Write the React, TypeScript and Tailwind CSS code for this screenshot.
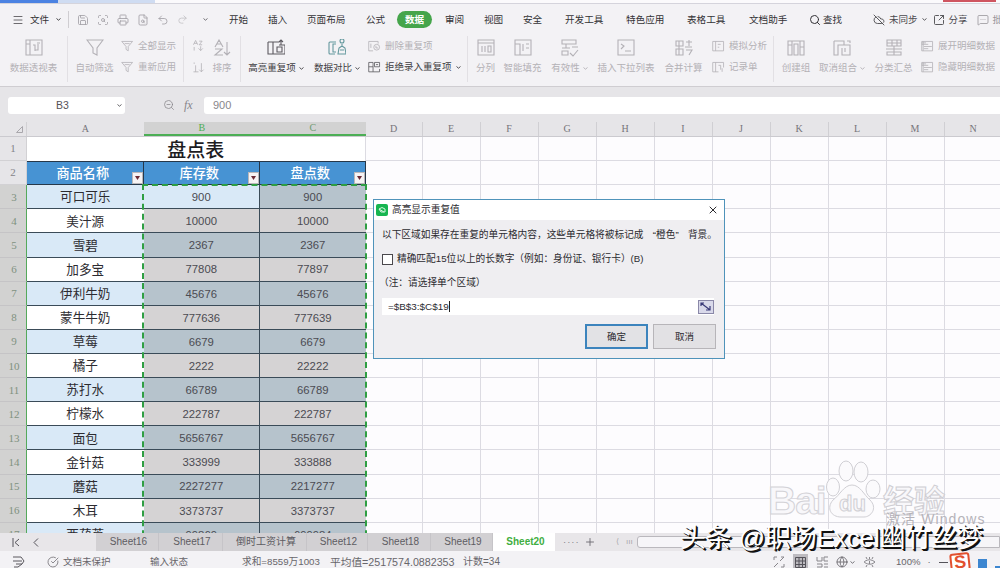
import { useState } from 'react'
import type { ReactNode } from 'react'
import clsx from 'clsx'
import {
  Menu,
  Save,
  Printer,
  FileSearch,
  ScanSearch,
  Undo2,
  Redo2,
  Search,
  CloudOff,
  SquareArrowOutUpRight,
  MessageSquareMore,
  X,
  Plus,
  ZoomOut,
  Globe,
  CheckCircle,
} from 'lucide-react'

interface Fila {
  nombre: string; stock: string; conteo: string;
}

const FILAS: Fila[] = [
  { nombre: '可口可乐', stock: '900', conteo: '900' },
  { nombre: '美汁源', stock: '10000', conteo: '10000' },
  { nombre: '雪碧', stock: '2367', conteo: '2367' },
  { nombre: '加多宝', stock: '77808', conteo: '77897' },
  { nombre: '伊利牛奶', stock: '45676', conteo: '45676' },
  { nombre: '蒙牛牛奶', stock: '777636', conteo: '777639' },
  { nombre: '草莓', stock: '6679', conteo: '6679' },
  { nombre: '橘子', stock: '2222', conteo: '22222' },
  { nombre: '苏打水', stock: '66789', conteo: '66789' },
  { nombre: '柠檬水', stock: '222787', conteo: '222787' },
  { nombre: '面包', stock: '5656767', conteo: '5656767' },
  { nombre: '金针菇', stock: '333999', conteo: '333888' },
  { nombre: '蘑菇', stock: '2227277', conteo: '2217277' },
  { nombre: '木耳', stock: '3373737', conteo: '3373737' },
  { nombre: '西葫芦', stock: '99869', conteo: '699984' },
]

const COLUMNAS = ['D', 'E', 'F', 'G', 'H', 'I', 'J', 'K', 'L', 'M', 'N']

const MENUS = [
  { label: '开始', w: 'w-[39px]' },
  { label: '插入', w: 'w-[39px]' },
  { label: '页面布局', w: 'w-[59px]' },
  { label: '公式', w: 'w-[31px]' },
  { label: '数据', w: 'w-[48px]' },
  { label: '审阅', w: 'w-[39px]' },
  { label: '视图', w: 'w-[39px]' },
  { label: '安全', w: 'w-[42px]' },
  { label: '开发工具', w: 'w-[61px]' },
  { label: '特色应用', w: 'w-[61px]' },
  { label: '表格工具', w: 'w-[62px]' },
  { label: '文档助手', w: 'w-[60px]' },
]

const HOJAS = [
  { label: 'Sheet16', w: 'w-[63px]' },
  { label: 'Sheet17', w: 'w-[64px]' },
  { label: '倒时工资计算', w: 'w-[84px]' },
  { label: 'Sheet12', w: 'w-[61px]' },
  { label: 'Sheet18', w: 'w-[63px]' },
  { label: 'Sheet19', w: 'w-[62px]' },
  { label: 'Sheet20', w: 'w-[62px]' },
]

const ICONOS: Record<string, string> = {
  pivot: 'M1 1h16v15H1zM1 5h4M5 1v15M8 6h2v6M13 5v6h-3M12 4h3',
  filtro: 'M1 1h16l-6 8v7l-4-2V9z',
  repetidos: 'M1 3h11M1 3v12h5M6 3v12M6 15h12V6h-6M10 8v5h5V8zM14 1v5M12 3l2-2 2 2',
  comparar: 'M8 3H2a1 1 0 0 0-1 1v10a1 1 0 0 0 1 1h5M8 5H5v8h3M12 2a2 2 0 1 1 4 0 2 2 0 0 1-4 0M14 5v3M10 15l1-6 3-2 3 2 1 6zM12 11h4',
  columnas: 'M1 1h16v15H1zM1 4h16M5 7v6M8 7v6M11 7h3v6h-3z',
  relleno: 'M1 1h16v15H1zM1 5h5v11M9 5v7M12 5h3M12 9h3',
  validez: 'M1 1h14v4H1zM1 9h8M1 12h6v4H1zM11 8h6M9 14l3 3 5-6M5 5v4',
  lista: 'M1 1h16v15H1zM4 5l3 2-3 3M8 12h6',
  consolidar: 'M1 2h7v5H1zM1 10h7v6H1zM4 2v14M11 3h6M14 1v6M11 11h6l-3 5M10 8h7',
  grupo: 'M1 2h4v14H1zM7 5h4v11H7zM13 2h4v14h-4zM1 6h4M13 8h4M5 2h8',
  desagrupar: 'M1 2h10v4M1 2v14h4V6h12v10H9V9M12 9v4M14 2h3v2',
  subtotal: 'M2 1h14v6H2zM2 4h14M7 1v6M12 1v6M1 10h16M2 13h14v3H2zM9 7v9',
  dupes: 'M14 5V2H1v13h6M4 5v6M8 10a4 4 0 1 1 8 0 4 4 0 0 1-8 0M11 8v3h3',
  rechazar: 'M1 2h6v13H1zM1 8h6M9 2h7v6H9zM7 15h9v-4M11 5h3',
  analisis: 'M1 2h15v13H1zM5 2v13M8 6h4M8 10h2',
  ficha: 'M1 2h15v7M1 2v13h8M5 2v13M9 6h3v6M14 10v5',
  detalle: 'M1 2h15v13H1zM1 6h9M4 9h11M4 12h6M1 4h6M3 2v13',
  reaplicar: 'M1 2h15l-6 7v6l-3-2V9zM5 5h7',
  az: 'M2 8l3-6 3 6M3 6h4M10 3h4l-4 5h4M3 11v5M12 10v6M9 13l3 3 3-3',
  asc: 'M3 2v2M5 6v9M2 15h7M13 3v12M10 12l3 3 3-3',
  ordenar: 'M2 8l4-7 4 7M4 5h4M2 10h7l-7 6h8M14 3v13M11 13l3 3 3-3',
}

function Icono({ name, size = 18, color = '#b3b1b6' }: { name: string; size?: number; color?: string }) {
  return (
    <svg width={size} height={size} viewBox="0 0 18 18" fill="none" stroke={color} strokeWidth={1.1}>
      <path d={ICONOS[name]} />
    </svg>
  )
}

function BotonGrande({ icon, label, w, activo, flecha, color }: {
  icon: string; label: string; w: string; activo?: boolean; flecha?: boolean; color?: string
}) {
  return (
    <div className={clsx('flex shrink-0 flex-col items-center gap-[4px] pt-[3px]', w)}>
      <Icono name={icon} color={color} />
      <span className={clsx('flex items-center gap-[3px] leading-[14px]', activo ? 'text-[#3f3e42]' : 'text-[#b3b1b6]')}>
        {label}
        {flecha && <Flecha />}
      </span>
    </div>
  )
}

function FilaPequena({ icon, label, activo, flecha }: { icon: string; label: string; activo?: boolean; flecha?: boolean }) {
  return (
    <div className={clsx('flex h-[14px] items-center gap-[4px]', activo ? 'text-[#3f3e42]' : 'text-[#b3b1b6]')}>
      <Icono name={icon} size={13} color={activo ? '#5a585d' : '#b3b1b6'} />
      <span>{label}</span>
      {flecha && <Flecha />}
    </div>
  )
}

function Flecha() {
  return (
    <svg width="5" height="3" viewBox="0 0 5 3" fill="none" stroke="currentColor" strokeWidth="0.9" className="shrink-0">
      <path d="M0.5 0.5l2 1.7 2-1.7" />
    </svg>
  )
}

function Separador() {
  return <div className="h-[46px] w-px shrink-0 bg-[#e2e0e4]" />
}

function Pila({ children, w }: { children: ReactNode; w: string }) {
  return <div className={clsx('flex shrink-0 flex-col gap-[7px] pt-[3px]', w)}>{children}</div>
}

function CabeceraTabla({ label }: { label: string }) {
  return (
    <div className="relative flex items-center justify-center border-t border-r border-b border-[#26384a] bg-[#4793d3] text-[13.2px] font-medium text-white">
      <span className="pr-1">{label}</span>
      <span className="absolute right-0 bottom-0 flex h-[12px] w-[11px] items-center justify-center border border-[#b9b7ba] bg-[#f6f3f4]">
        <svg width="5" height="4" viewBox="0 0 5 4" fill="#6b2a35"><path d="M0 0h5L2.500 4z" /></svg>
      </span>
    </div>
  )
}

function Vacias() {
  return (
    <>
      {COLUMNAS.map(c => (
        <div key={c} className="border-r border-b border-[#dcdbe2]" />
      ))}
    </>
  )
}

export default function App() {
  const [hoja, setHoja] = useState('Sheet20')
  const [abierto, setAbierto] = useState(true)

  return (
    <div className="relative flex h-[568px] w-[1000px] flex-col overflow-hidden bg-[#f3f2f5] font-['Liberation_Sans','Noto_Sans_CJK_SC',sans-serif] text-[9.5px] leading-none whitespace-nowrap text-[#333236]">

      {/* BARRA DE TITULO */}
      <div className="flex h-[4px] shrink-0 items-start border-b border-[#d5d4dc] bg-[#fbfafc]">
        <div className="h-[3px] w-[58px] bg-[#4b82e2]" />
        <div className="h-[3px] w-[97px] bg-[#cfdcf2]" />
        <div className="ml-[788px] h-[2px] w-[53px] bg-[#cf5560]" />
      </div>

      {/* MENU */}
      <div className="flex h-[31px] shrink-0 items-center">
        <div className="flex w-[68px] shrink-0 items-center pl-[12px]">
          <Menu size={12} strokeWidth={1.8} className="text-[#5d5b60]" />
          <span className="mr-[7px] ml-[6px] text-[9.6px]">文件</span>
          <Flecha />
        </div>
        <div className="h-[17px] w-px shrink-0 bg-[#cfcdd1]" />
        <div className="flex w-[160px] shrink-0 items-center gap-[8px] pl-[8px] text-[#a3a1a6]">
          <Save size={12} strokeWidth={1.7} />
          <ScanSearch size={12} strokeWidth={1.7} />
          <Printer size={12} strokeWidth={1.7} />
          <FileSearch size={12} strokeWidth={1.7} />
          <Undo2 size={12} strokeWidth={1.7} />
          <Redo2 size={11} strokeWidth={1.7} className="text-[#c0bec3]" />
          <span className="ml-[7px] text-[#66646a]"><Flecha /></span>
        </div>
        {MENUS.map(m => m.label === '数据' ? (
          <div key={m.label} className="w-[48px] shrink-0">
            <span className="flex h-[17px] w-[35px] items-center justify-center rounded-full bg-[#45a54b] text-[9.6px] font-bold text-white">{m.label}</span>
          </div>
        ) : (
          <span key={m.label} className={clsx('shrink-0 text-[9.6px]', m.w)}>{m.label}</span>
        ))}
        <div className="flex w-[64px] shrink-0 items-center gap-[2px]">
          <Search size={12} strokeWidth={2} /> 查找
        </div>
        <div className="flex shrink-0 items-center gap-[4px] text-[#4a494d]">
          <CloudOff size={12} strokeWidth={1.8} />
          <span>未同步</span>
          <Flecha />
          <SquareArrowOutUpRight size={12} strokeWidth={1.8} className="ml-[2px]" />
          <span>分享</span>
          <span className="ml-[5px] flex items-center gap-[4px] text-[#98969b]"><MessageSquareMore size={12} strokeWidth={1.6} />批注</span>
        </div>
      </div>

      {/* CINTA */}
      <div className="flex h-[52px] shrink-0 border-b border-[#cfcdd1] pt-px">
        <BotonGrande icon="pivot" label="数据透视表" w="w-[67px]" />
        <Separador />
        <BotonGrande icon="filtro" label="自动筛选" w="w-[53px]" />
        <Pila w="w-[62px]">
          <FilaPequena icon="reaplicar" label="全部显示" />
          <FilaPequena icon="reaplicar" label="重新应用" />
        </Pila>
        <Separador />
        <div className="flex w-[28px] shrink-0 flex-col items-center gap-[9px] pt-[3px]">
          <Icono name="az" size={13} />
          <Icono name="asc" size={13} />
        </div>
        <BotonGrande icon="ordenar" label="排序" w="w-[20px]" />
        <div className="w-[8px] shrink-0" />
        <Separador />
        <BotonGrande icon="repetidos" label="高亮重复项" w="w-[70px]" activo flecha color="#5c5a60" />
        <BotonGrande icon="comparar" label="数据对比" w="w-[52px]" activo flecha color="#63989d" />
        <Pila w="w-[104px] pl-[5px]">
          <FilaPequena icon="dupes" label="删除重复项" />
          <FilaPequena icon="rechazar" label="拒绝录入重复项" activo flecha />
        </Pila>
        <Separador />
        <BotonGrande icon="columnas" label="分列" w="w-[35px]" />
        <BotonGrande icon="relleno" label="智能填充" w="w-[39px]" />
        <BotonGrande icon="validez" label="有效性" w="w-[55px]" flecha />
        <BotonGrande icon="lista" label="插入下拉列表" w="w-[58px]" />
        <BotonGrande icon="consolidar" label="合并计算" w="w-[57px]" />
        <Pila w="w-[61px]">
          <FilaPequena icon="analisis" label="模拟分析" />
          <FilaPequena icon="ficha" label="记录单" />
        </Pila>
        <Separador />
        <BotonGrande icon="grupo" label="创建组" w="w-[44px]" />
        <BotonGrande icon="desagrupar" label="取消组合" w="w-[48px]" flecha />
        <BotonGrande icon="subtotal" label="分类汇总" w="w-[55px]" />
        <Pila w="w-[80px]">
          <FilaPequena icon="detalle" label="展开明细数据" />
          <FilaPequena icon="detalle" label="隐藏明细数据" />
        </Pila>
      </div>

      {/* BARRA DE FORMULAS */}
      <div className="flex h-[35px] shrink-0 items-center bg-[#e6e5e8] pt-px">
        <div className="ml-[8px] flex h-[17px] w-[117px] items-center rounded-[3px] bg-white text-[10.5px] text-[#555358]">
          <span className="w-[109px] text-center">B3</span>
          <Flecha />
        </div>
        <ZoomOut size={12} strokeWidth={1.5} className="ml-[38px] text-[#88868b]" />
        <span className="ml-[9px] w-[20px] font-['Liberation_Serif',serif] text-[12px] text-[#88868b] italic">fx</span>
        <div className="flex h-[17px] flex-1 items-center rounded-l-[3px] bg-white pl-[9px] text-[11px] text-[#88868b]">900</div>
      </div>

      {/* HOJA DE CALCULO */}
      <div className="relative h-[411px] shrink-0 overflow-hidden bg-[#fdfcfe]">
        <div className="grid h-[15px] grid-cols-[27px_116.5px_116.5px_105.5px_57px_repeat(10,58px)] border-b border-[#cbcacf] bg-[#e6e5e8] font-['Liberation_Serif',serif] text-[10px] text-[#76747a]">
          <div className="flex items-end justify-end border-r border-[#d2d1d4] pr-[3px] pb-[3px]">
            <svg width="7" height="7" viewBox="0 0 7 7" fill="none" stroke="#a9a7ac"><path d="M6.500 0.500v6h-6z" /></svg>
          </div>
          <div className="flex items-center justify-center">A</div>
          <div className="flex items-center justify-center border-b-2 border-[#4cae55] bg-[#d2d2d2] text-[#4cae55]">B</div>
          <div className="flex items-center justify-center border-b-2 border-[#4cae55] bg-[#d2d2d2] text-[#6f9b72]">C</div>
          {COLUMNAS.map(c => (
            <div key={c} className="flex items-center justify-center border-r border-[#d0cfd3]">{c}</div>
          ))}
        </div>

        <div className="grid auto-rows-[24.12px] grid-cols-[27px_116.5px_116.5px_105.5px_57px_repeat(10,58px)]">
          <div className="flex items-center justify-center border-r border-b border-[#d2d1d4] bg-[#e6e5e8] font-['Liberation_Serif',serif] text-[11px] text-[#85838a]">1</div>
          <div className="col-span-3 flex items-center justify-center border-r border-[#dcdbe2] bg-white pt-[2px] text-[19px] font-medium text-[#1d1c1f]">盘点表</div>
          <Vacias />
          <div className="flex items-center justify-center border-r border-b border-[#d2d1d4] bg-[#e6e5e8] font-['Liberation_Serif',serif] text-[11px] text-[#85838a]">2</div>
          <CabeceraTabla label="商品名称" />
          <CabeceraTabla label="库存数" />
          <CabeceraTabla label="盘点数" />
          <Vacias />
          {FILAS.map((f, i) => (
            <div key={f.nombre} className="contents">
              <div className="flex items-center justify-center border-r border-b border-r-[#55a95b] border-b-[#c5c4c6] bg-[#d2d2d1] pt-px pl-[2px] font-['Liberation_Serif',serif] text-[11px] text-[#7f917f]">{i + 3}</div>
              <div className={clsx('flex items-center justify-center border-b border-[#3a4b58] pt-[2px] text-[12.6px] text-[#2c2b30]', i % 2 ? 'bg-white' : 'bg-[#d9e9f7]')}>{f.nombre}</div>
              <div className={clsx('flex items-center justify-center border-r border-b border-[#3a4b58] pt-[2px] text-[11.3px] text-[#4b4b52]', i === 0 ? 'bg-[#d9e9f7]' : i % 2 ? 'bg-[#d5d3d4]' : 'bg-[#b6c3cc]')}>{f.stock}</div>
              <div className={clsx('flex items-center justify-center border-b border-[#3a4b58] pt-[2px] text-[11.3px] text-[#4b4b52]', i % 2 ? 'bg-[#d5d3d4]' : 'bg-[#b6c3cc]')}>{f.conteo}</div>
              <Vacias />
            </div>
          ))}
        </div>

        {/* borde de la seleccion copiada */}
        <div className="absolute top-[62px] left-[142px] h-[372px] w-[225px] border-2 border-dashed border-[#2f9e43]" />
      </div>

      {/* PESTAÑAS */}
      <div className="flex h-[18px] shrink-0 items-center bg-[#e8e6e9] text-[#6b696f]">
        <div className="flex w-[96px] shrink-0 items-center gap-[13px] pl-[12px]">
          <svg width="8" height="9" viewBox="0 0 8 9" fill="none" stroke="#55535a"><path d="M1 0v9M7 1L3 4.500 7 8" /></svg>
          <svg width="6" height="9" viewBox="0 0 6 9" fill="none" stroke="#55535a"><path d="M5 0.500L1 4.500l4 4" /></svg>
        </div>
        {HOJAS.map(h => (
          <button
            key={h.label}
            onClick={() => setHoja(h.label)}
            className={clsx('flex h-full shrink-0 items-center justify-center pl-[3px] text-[10px]', h.w, hoja === h.label ? 'bg-white font-bold text-[#3fae42]' : 'border-r border-[#c6c4c8] bg-[#d2d0d3] text-[#5e5c62]')}
          >
            {h.label}
          </button>
        ))}
        <span className="ml-[8px] w-[21px] tracking-[1px] text-[#85838a]">····</span>
        <Plus size={12} strokeWidth={1.8} />
        <div className="ml-[20px] flex items-center gap-[7px] text-[8px] text-[#a9a7ac]"><span>⟨</span><span>ııı</span></div>
        <div className="ml-[4px] h-[12px] flex-1 rounded-l-[3px] border border-[#bab8bd] bg-[#f6f5f8]" />
      </div>

      {/* BARRA DE ESTADO */}
      <div className="flex h-[19px] shrink-0 items-center bg-[#f3f2f5] pt-[3px] text-[#68666b]">
        <svg width="13" height="12" viewBox="0 0 13 12" fill="none" stroke="#5a585e" className="ml-[12px] shrink-0">
          <path d="M1 1h8l3 4-2 3-4 3H2M1 5h9M4 8h6" />
        </svg>
        <CheckCircle size={12} strokeWidth={1.5} className="ml-[22px] shrink-0" />
        <span className="ml-[4px] w-[87px] shrink-0">文档未保护</span>
        <span className="w-[92px] shrink-0">输入状态</span>
        <span className="w-[88px] shrink-0 text-[9.7px]">求和=8559万1003</span>
        <span className="w-[133px] shrink-0 text-[10.7px]">平均值=2517574.0882353</span>
        <span className="w-[310px] shrink-0 text-[10px]">计数=34</span>
        <svg width="12" height="12" viewBox="0 0 12 12" fill="none" stroke="#88868b" className="shrink-0"><path d="M1 4V1h3M8 1h3l-4 4M1 11l4-4M8 11h3V8" /></svg>
        <span className="ml-[8px] flex h-[16px] w-[15px] shrink-0 items-center justify-center bg-[#bdbbc0]">
          <svg width="11" height="11" viewBox="0 0 11 11" fill="none" stroke="#55535a"><path d="M.5.5h10v10H.5zM.5 4h10M.5 7.500h10M4 .5v10M7.500 .5v10" /></svg>
        </span>
        <svg width="13" height="12" viewBox="0 0 13 12" fill="none" stroke="#88868b" className="ml-[8px] shrink-0"><path d="M1 1v4h5V1M8 5V1h4M8 5h4M1 8h5v3H1M8 8h4M8 11h4" /></svg>
        <Globe size={12} strokeWidth={1.7} className="ml-[7px] shrink-0" />
        <span className="mr-[8px] ml-[2px]"><Flecha /></span>
        <svg width="13" height="12" viewBox="0 0 13 12" fill="none" stroke="#88868b" className="shrink-0"><path d="M1 6s5-5 11 0c-5 5-11 0-11 0M6.500 1v2M3 1l1 2M10 1L9 3M6.500 5v3M3 11l1-2M10 11l-1-2" /></svg>
        <span className="ml-[20px] text-[9.6px]">100%</span>
        <span className="ml-[7px]">·</span>
        <span className="ml-[8px] h-px w-[9px] shrink-0 bg-[#55535a]" />
      </div>

      {/* DIALOGO DE VALORES REPETIDOS */}
      {abierto && (
        <div className="absolute top-[199px] left-[373px] flex h-[160px] w-[352px] flex-col border border-[#4f93ba] bg-[#efeef1] text-[#2c2b30]">
          <div className="flex h-[20px] shrink-0 items-center bg-white pl-[2px]">
            <span className="flex h-[12px] w-[12px] items-center justify-center rounded-[2px] bg-[#17b550]">
              <svg width="8" height="8" viewBox="0 0 8 8" fill="none" stroke="#d7f5df"><path d="M1 3q3-3 6 0v3H3L1 3l5 3" /></svg>
            </span>
            <span className="ml-[4px] text-[9.7px]">高亮显示重复值</span>
            <button onClick={() => setAbierto(false)} className="mr-[5px] ml-auto"><X size={12} strokeWidth={2} /></button>
          </div>
          <div className="flex items-center justify-between pt-[9px] pr-[7px] pl-[8px] text-[9.7px] leading-[12px]">
            <span>以下区域如果存在重复的单元格内容，这些单元格将被标记成</span>
            <span>“橙色”</span>
            <span>背景。</span>
          </div>
          <label className="mt-[12px] flex items-center gap-[4px] pl-[8px] text-[9.7px] leading-[12px]">
            <span className="h-[11px] w-[11px] border border-[#4a484d] bg-white" />
            精确匹配15位以上的长数字（例如：身份证、银行卡）(B)
          </label>
          <p className="mt-[12px] pl-[5px] text-[9.7px] leading-[12px]">（注：请选择单个区域）</p>
          <div className="mt-[9px] mr-[10px] ml-[8px] flex h-[17px] items-center bg-white pl-[6px] text-[9.9px]">
            <span className="border-r border-[#222] py-px">=$B$3:$C$19</span>
            <span className="ml-auto flex h-[14px] w-[16px] items-center justify-center border border-[#8a88a8] bg-[#d9d9ea]">
              <svg width="12" height="10" viewBox="0 0 12 10" fill="none" stroke="#3a3a78" strokeWidth="1.2"><path d="M1 1l9 7M10 4v4H6M1 4V1h3" /></svg>
            </span>
          </div>
          <div className="mt-[9px] mr-[8px] flex justify-end gap-[5px]">
            <button className="h-[25px] w-[63px] border-2 border-[#3c84bd] bg-[#e2e2e5]">确定</button>
            <button className="h-[25px] w-[63px] border border-[#b7b5b9] bg-[#e2e1e4]">取消</button>
          </div>
        </div>
      )}

      {/* MARCAS DE AGUA */}
      <div className="pointer-events-none absolute top-[456px] left-[768px] flex h-[70px] items-end text-[#f8f7fa]">
        <span className="w-[57px] pb-[9px] text-[39px] leading-[32px] font-bold tracking-[-1px] [-webkit-text-stroke:1px_#d3d2d7]">Bai</span>
        <svg width="58" height="64" viewBox="0 0 56 64" fill="#fbfafc" stroke="#d0cfd4" className="mb-[4px]">
          <ellipse cx="20" cy="13" rx="7" ry="10" />
          <ellipse cx="35" cy="14" rx="7" ry="10" />
          <ellipse cx="7" cy="29" rx="6.5" ry="9" />
          <ellipse cx="47" cy="31" rx="7" ry="9" />
          <path d="M26 27c8 0 12 10 18 15 8 8 1 17-6 17H15C5 59 0 50 7 42c7-5 11-15 19-15z" />
          <text x="13" y="53" fontSize="22" fontWeight="bold" fill="#f8f7fa">du</text>
        </svg>
        <span className="pb-[7px] text-[31px] leading-[34px] font-bold [-webkit-text-stroke:1px_#cfced3]">经验</span>
      </div>
      <div className="pointer-events-none absolute top-[512px] left-[886px] text-[14px] tracking-[1.1px] text-[#b5b3b9]">激活 Windows</div>
      <div className="pointer-events-none absolute top-[522px] left-[680px] text-[26px] leading-[32px] tracking-[-0.15px] text-white [text-shadow:1px_1px_0_#111,2px_2px_0_#111]">头条 @职场Excel幽竹丝梦</div>
      <div className="pointer-events-none absolute top-[553px] left-[950px] flex items-end gap-[8px]">
        <span className="flex h-[18px] w-[20px] -rotate-6 items-center justify-center rounded-[3px] border-2 border-[#e2512f] bg-white text-[18px] font-bold text-[#e2512f]">S</span>
        <span className="mb-[3px] h-[9px] w-[9px] bg-[#3c86d0]" />
        <span className="mb-[2px] h-[3px] w-[5px] bg-[#3c86d0]" />
      </div>
    </div>
  )
}
